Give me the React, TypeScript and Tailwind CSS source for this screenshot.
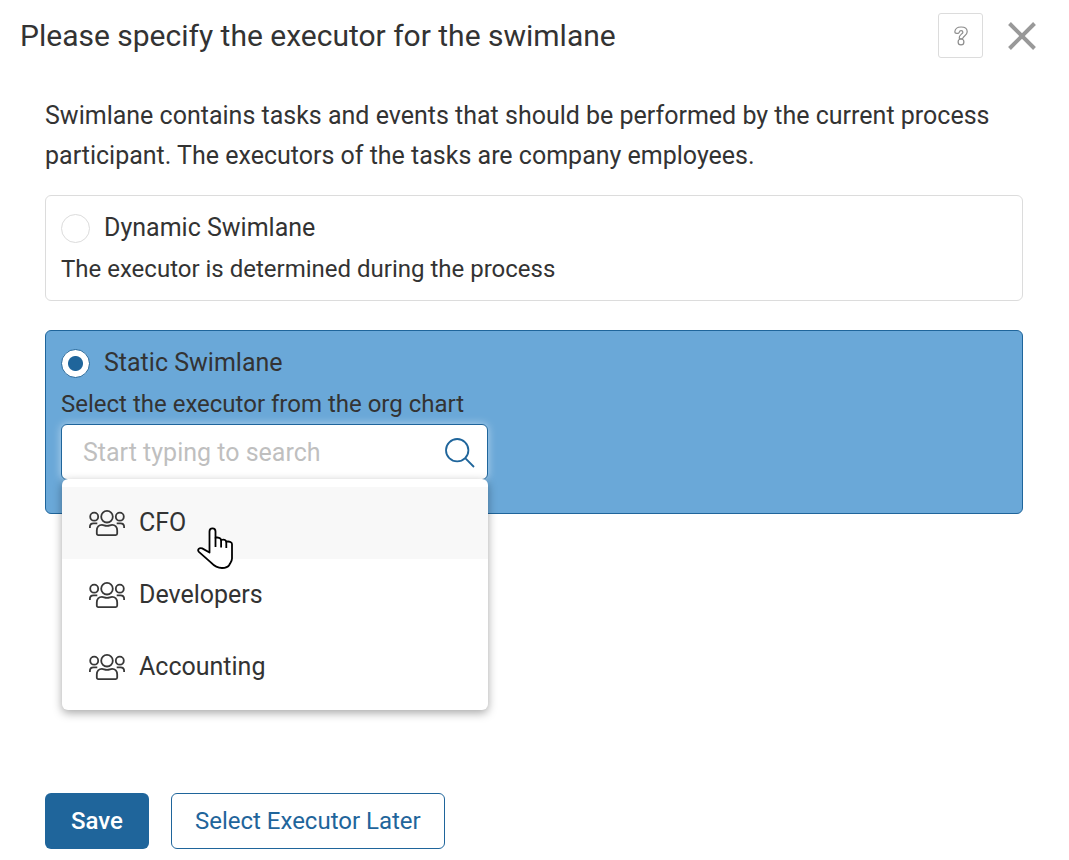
import { useState } from "react";

const employees = ["CFO", "Developers", "Accounting"];

function GroupIcon() {
  return (
    <svg width="36" height="26" viewBox="0 0 36 26" fill="none" stroke="#383838" strokeWidth="1.8" aria-hidden="true" className="shrink-0">
      <circle cx="18" cy="6.7" r="5.8" />
      <circle cx="5.2" cy="6.7" r="4" />
      <circle cx="30.8" cy="6.7" r="4" />
      <path d="M0.9 18v-1.2c0-2.4 1.5-3.5 3.6-3.5h3.8M35.1 18v-1.2c0-2.4-1.5-3.5-3.6-3.5h-3.8" />
      <path d="M7.800 20.500c0-3.400 2.100-5.600 5.100-5.600 1.800 0 2.700.9 5.100.9s3.300-.9 5.100-.9c3 0 5.100 2.200 5.100 5.600v3.100c0 .9-.6 1.500-1.500 1.500H9.300c-.9 0-1.500-.6-1.500-1.500z" />
    </svg>
  );
}

function PointerCursor() {
  return (
    <svg width="38" height="42" viewBox="0 0 38 42" aria-hidden="true" className="pointer-events-none absolute top-[48px] left-[135px] z-10">
      <path
        d="M12.500 25.500V4.500c0-4.300 6-4.300 6 0v6.200c2.600-.6 5.200.2 5.600 2.300 2.400-.6 4.700.1 5.200 1.700 2.600-.5 5.700.1 5.700 2.300v14.500c0 3-1.800 4.300-2.600 6.200-1.200 2.200-4 3.300-7.400 3.300-5 0-8.200-2.500-11.200-5.700L1.900 24.800c-1.900-2.200.3-4.200 3.300-3.400z"
        fill="#fff"
        stroke="#000"
        strokeWidth="1.800"
        strokeLinejoin="round"
      />
      <path d="M18.500 10.500v9.500M24.100 13v7.500M29.300 14.500v6.500" fill="none" stroke="#000" strokeWidth="1.800" />
    </svg>
  );
}

const radioClass =
  "size-[29px] shrink-0 appearance-none rounded-full border border-[#dcdcdc] bg-white checked:border-[#1f659b] checked:bg-[radial-gradient(circle,#1f659b_7px,#ffffff_8px)]";

export default function App() {
  const [mode, setMode] = useState("static");
  const [query, setQuery] = useState("");

  return (
    <div role="dialog" aria-labelledby="dialog-title" className="bg-white font-['Roboto',sans-serif] text-[25px] text-[#333]">
      <header className="flex items-center pt-[13px] pr-8 pl-5">
        <h1 id="dialog-title" className="flex-1 text-[30px] leading-[45px]">Please specify the executor for the swimlane</h1>
        <button type="button" aria-label="Help" className="flex size-[45px] items-center justify-center rounded-[3px] border border-[#dcdcdc]">
          <svg width="14" height="20" viewBox="0 0 14 20" fill="none" stroke="#8c8c8c" strokeWidth="1.200" aria-hidden="true">
            <path d="M.8 6C1 2.900 3.500 1 7.100 1c3.700 0 6.100 2 6.100 4.800 0 3.500-3.900 3.900-4.300 6.400-.1.900-3.600.9-3.700 0-.4-3.600 3.700-4.100 3.700-6 0-.9-.7-1.500-1.800-1.500-1.200 0-1.600.6-1.900 1.600C4.700 8 .8 7.800.8 6z" />
            <circle cx="7" cy="15.900" r="2.900" />
          </svg>
        </button>
        <button type="button" aria-label="Close" className="ml-6 flex size-[30px] items-center justify-center">
          <svg width="28" height="28" viewBox="0 0 28 28" stroke="#999" strokeWidth="4" aria-hidden="true">
            <path d="M1.500 1.500l25 25M26.500 1.500l-25 25" />
          </svg>
        </button>
      </header>

      <form className="flex flex-col pt-[38px] pr-[46px] pl-[45px]" onSubmit={(e) => e.preventDefault()}>
        <p className="leading-10">
          Swimlane contains tasks and events that should be performed by the current process participant. The executors of the tasks are company employees.
        </p>

        <section className="mt-[19px] rounded-md border border-[#dcdcdc] px-[15px] pt-[15px] pb-[11px]">
          <label className="flex h-[34px] items-center gap-[14px]">
            <input type="radio" name="mode" checked={mode === "dynamic"} onChange={() => setMode("dynamic")} className={radioClass} />
            Dynamic Swimlane
          </label>
          <p className="mt-1 text-2xl leading-10">The executor is determined during the process</p>
        </section>

        <section className="mt-[29px] rounded-md border border-[#1f659b] bg-[#6aa8d8] px-[15px] pt-[15px] pb-[33px]">
          <label className="flex h-[34px] items-center gap-[14px]">
            <input type="radio" name="mode" checked={mode === "static"} onChange={() => setMode("static")} className={radioClass} />
            Static Swimlane
          </label>
          <label htmlFor="executor" className="mt-1 block text-2xl leading-10">Select the executor from the org chart</label>
          <div className="relative max-w-[427px]">
            <div className="flex h-14 items-center rounded-md border border-[#1f659b] bg-white pt-[2px] pr-3 pl-[21px] shadow-[0_0_8px_rgba(255,255,255,0.5)]">
              <input
                id="executor"
                type="text"
                value={query}
                onChange={(e) => setQuery(e.target.value)}
                placeholder="Start typing to search"
                className="min-w-0 flex-1 outline-none placeholder:text-[#bfbfbf]"
              />
              <svg width="30" height="30" viewBox="0 0 30 30" fill="none" stroke="#1f659b" strokeWidth="1.800" aria-hidden="true">
                <circle cx="12.200" cy="12.200" r="11.200" />
                <path d="M20.200 20.200l8.800 8.800" />
              </svg>
            </div>
            <div className="absolute top-[55px] right-0 left-px rounded-md bg-white pt-2 pb-[7px] shadow-[0_3px_10px_rgba(0,0,0,0.35)]">
              <ul>
                {employees.map((name, i) => (
                  <li key={name}>
                    <button type="button" className={`flex h-[72px] w-full items-center gap-[14px] pl-[27px] text-left ${i === 0 ? "bg-[#f8f8f8]" : ""}`}>
                      <GroupIcon />
                      {name}
                    </button>
                  </li>
                ))}
              </ul>
              <PointerCursor />
            </div>
          </div>
        </section>

        <div className="mt-[279px] flex gap-[22px] pb-[11px] text-2xl">
          <button type="submit" className="h-14 rounded-md bg-[#1f659b] px-[26px] font-medium text-white">Save</button>
          <button type="button" className="h-14 rounded-md border border-[#1f659b] px-[23px] text-[#1f659b]">Select Executor Later</button>
        </div>
      </form>
    </div>
  );
}
